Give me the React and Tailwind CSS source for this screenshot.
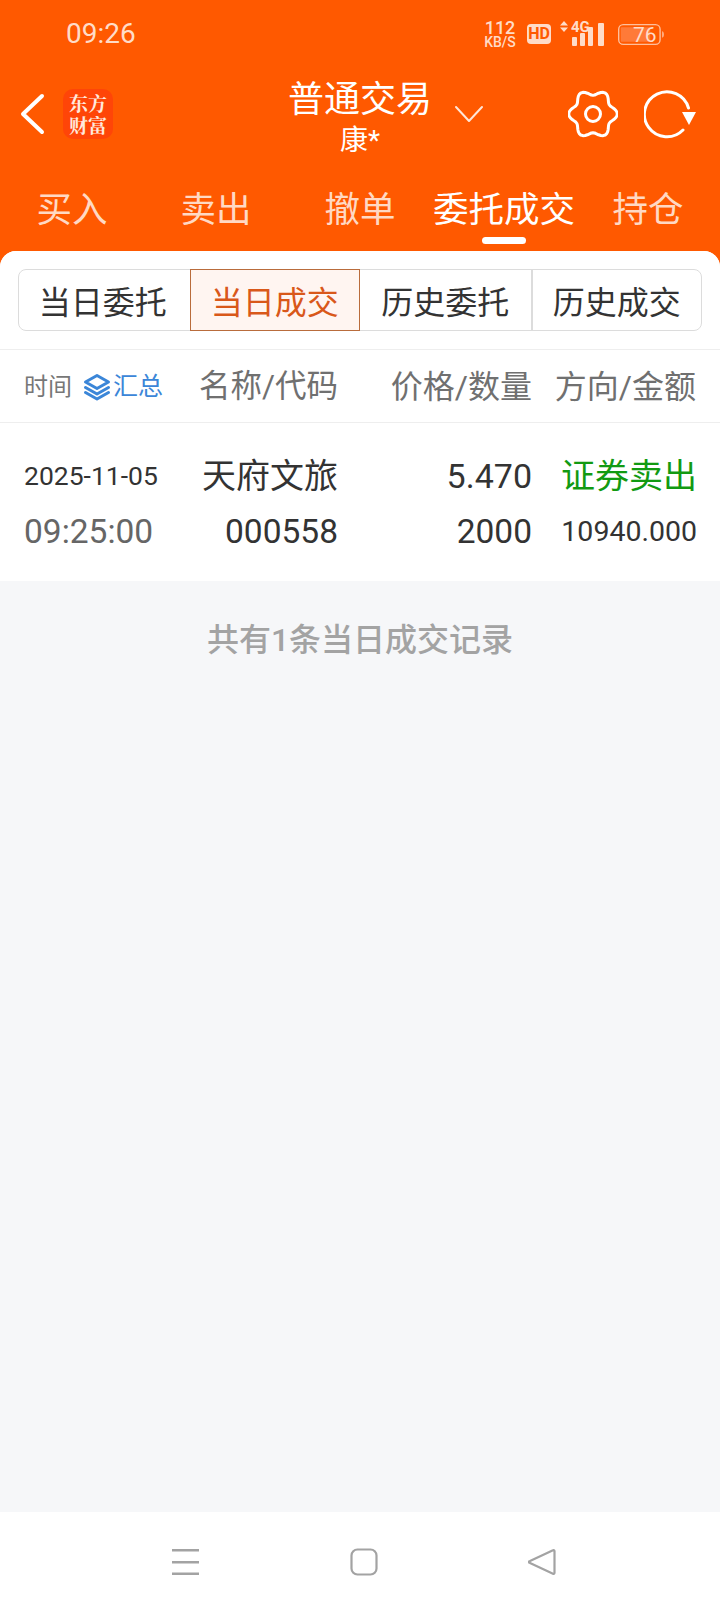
import React from "react";

const tabs = ["买入", "卖出", "撤单", "委托成交", "持仓"];
const segments = ["当日委托", "当日成交", "历史委托", "历史成交"];

// wavy ring for the settings gear, six lobes
const gearPath = () => {
  const pts = [];
  for (let deg = 0; deg < 360; deg += 5) {
    const t = (deg * Math.PI) / 180;
    const r = 21.500 + 2.800 * Math.cos(6 * t);
    pts.push(`${(25 + r * Math.cos(t)).toFixed(2)} ${(25 + r * Math.sin(t)).toFixed(2)}`);
  }
  return "M" + pts.join("L") + "Z";
};

const StatusIcons = () => (
  <div className="flex items-center text-[#ffdcc8]">
    <div className="flex w-[34px] flex-col items-center pr-[4px] font-medium">
      <span className="block text-[18px] leading-[16px]">112</span>
      <span className="block text-[14px] leading-[13px]">KB/S</span>
    </div>
    <div className="ml-[8px] flex h-[20px] w-[24px] items-center justify-center rounded-[4px] bg-[#ffdcc8] text-[16px] font-bold leading-none text-[#ff5900]">
      HD
    </div>
    <div className="relative ml-[9px] h-[26px] w-[46px]">
      <svg width="46" height="26" viewBox="0 0 46 26" fill="#ffdcc8">
        <path d="M4 0l4 4.500H0zM4 11L0 6.500h8z" />
        <rect x="12" y="16" width="5" height="9" rx="1" />
        <rect x="20" y="12" width="5" height="13" rx="1" />
        <rect x="28" y="6" width="5" height="19" rx="1" />
        <rect x="38" y="2" width="6" height="23" rx="1" />
      </svg>
      <span className="absolute left-[11px] top-[-1px] text-[15px] font-bold leading-[14px]">4G</span>
    </div>
    <div className="relative ml-[12px] flex h-[23px] w-[46px] items-center">
      <svg width="50" height="23" viewBox="0 0 50 23" fill="none">
        <rect x="0.750" y="0.750" width="45" height="21.500" rx="5" stroke="#ffbf9c" strokeWidth="1.500" />
        <path d="M4 3.500h31v16H4a1 1 0 0 1-1-1v-14a1 1 0 0 1 1-1z" fill="#ff7a38" />
        <path d="M48 8c1.200.3 1.800 1.400 1.800 3.500S49.200 14.700 48 15z" fill="#ffbf9c" />
      </svg>
      <span className="absolute left-[15px] top-[1px] text-[21px] leading-[22px] text-[#ffdcc8]">76</span>
    </div>
  </div>
);

const Header = () => (
  <div className="bg-[#ff5900] h-[251px] text-white">
    <div className="flex h-[66px] items-center justify-between pl-[66px] pr-[56px] pt-[2px]">
      <span className="text-[28px] leading-none text-[#ffdcc8]">09:26</span>
      <StatusIcons />
    </div>

    <div className="flex h-[96px] items-center">
      <div className="flex w-[200px] items-center pl-[19px]">
        <svg width="26" height="42" viewBox="0 0 26 42" fill="none">
          <path d="M23 3L4 21l19 18" stroke="white" strokeWidth="4" strokeLinecap="round" strokeLinejoin="round" />
        </svg>
        <div className="ml-[18px] flex h-[50px] w-[50px] flex-col items-center justify-center rounded-[10px] bg-[#ff4508] font-['Noto_Serif_CJK_SC',serif] text-[19px] font-bold leading-[22px] text-[#ffe9dd]">
          <span className="block">东方</span>
          <span className="block">财富</span>
        </div>
      </div>

      <div className="flex flex-1 items-center justify-center">
        <div className="w-[52px]" />
        <div className="mt-[12px] flex w-[144px] flex-col items-center">
          <span className="whitespace-nowrap text-[36px] leading-[42px]">普通交易</span>
          <span className="text-[28px] leading-[40px]">康*</span>
        </div>
        <svg className="ml-[22px]" width="30" height="18" viewBox="0 0 30 18" fill="none">
          <path d="M2 2l13 14L28 2" stroke="#ffe6d8" strokeWidth="2" strokeLinecap="round" strokeLinejoin="round" />
        </svg>
      </div>

      <div className="flex w-[200px] items-center justify-end gap-[26px] pr-[23px]">
        <svg width="50" height="50" viewBox="0 0 50 50" fill="none">
          <path d={gearPath()} stroke="white" strokeWidth="3" strokeLinejoin="round" />
          <circle cx="25" cy="25" r="7.500" stroke="white" strokeWidth="3" />
        </svg>
        <svg width="53" height="50" viewBox="0 0 53 50" fill="none">
          <path d="M44.500 19A22.500 22.500 0 1 0 39 41" stroke="white" strokeWidth="3" strokeLinecap="round" />
          <path d="M38 23h14l-7 13z" fill="white" />
        </svg>
      </div>
    </div>

    <div className="grid grid-cols-5 pt-[25px]">
      {tabs.map((t, i) => (
        <div key={t} className="flex flex-col items-center">
          <span className={`text-[35.500px] leading-[46px] whitespace-nowrap ${i === 3 ? "text-white" : "text-[#ffd9c4]"}`}>{t}</span>
          {i === 3 && <div className="mt-[4px] h-[7px] w-[44px] rounded-full bg-white" />}
        </div>
      ))}
    </div>
  </div>
);

const Segments = () => (
  <div className="px-[18px] pt-[18px] pb-[18px]">
    <div className="grid h-[62px] grid-cols-4 rounded-[8px] border border-[#dcdcdc]">
      {segments.map((s, i) => (
        <div
          key={s}
          className={`flex items-center justify-center pt-[5px] text-[32px] ${
            i === 1
              ? "-my-px border border-[#b96c3c] bg-[#fff5f1] text-[#d9581a]"
              : "text-[#333333]"
          } ${i === 0 ? "pr-[3px]" : ""} ${i === 3 ? "border-l-2 border-[#dcdcdc]" : ""}`}
        >
          {s}
        </div>
      ))}
    </div>
  </div>
);

const TableHead = () => (
  <div className="flex h-[74px] items-center border-y border-[#eeeeee] pl-[24px] pt-[2px] text-[#707070]">
    <div className="flex w-[150px] items-center">
      <span className="text-[24px] text-[#777777]">时间</span>
      <svg className="ml-[11px]" width="28" height="28" viewBox="0 0 28 28" fill="none" stroke="#3b86d8" strokeWidth="3" strokeLinejoin="round" strokeLinecap="round">
        <path d="M14 2.500L25.500 9 14 15.500 2.500 9z" />
        <path d="M2.500 14.500L14 21l11.500-6.500" />
        <path d="M2.500 19.500L14 26l11.500-6.500" />
      </svg>
      <span className="ml-[2px] whitespace-nowrap text-[25px] text-[#3b86d8]">汇总</span>
    </div>
    <div className="w-[164px] whitespace-nowrap text-right text-[31.500px]">名称/代码</div>
    <div className="w-[194px] whitespace-nowrap text-right text-[32px]">价格/数量</div>
    <div className="w-[165px] whitespace-nowrap pr-[1px] text-right text-[32px]">方向/金额</div>
  </div>
);

const TradeRow = () => (
  <div className="bg-white pl-[24px] pt-[27px] h-[158px]">
    <div className="flex h-[52px] items-center text-[#333333]">
      <div className="w-[150px] text-[26.500px]">2025-11-05</div>
      <div className="w-[164px] text-right text-[34px]">天府文旅</div>
      <div className="w-[194px] text-right text-[34px]">5.470</div>
      <div className="w-[165px] whitespace-nowrap text-right text-[34px] text-[#129a12]">证券卖出</div>
    </div>
    <div className="mt-[2px] flex h-[56px] items-center text-[#333333]">
      <div className="w-[150px] text-[33.500px] text-[#666666]">09:25:00</div>
      <div className="w-[164px] text-right text-[33.500px]">000558</div>
      <div className="w-[194px] text-right text-[33.500px]">2000</div>
      <div className="w-[165px] text-right text-[28.500px]">10940.000</div>
    </div>
  </div>
);

const NavBar = () => (
  <div className="flex h-[100px] items-start justify-center gap-[150px] bg-white pl-[8px] pt-[36px]">
    <svg width="28" height="28" viewBox="0 0 28 28" fill="#a3a3a3">
      <rect y="1" width="27" height="2.500" />
      <rect y="13" width="27" height="2.500" />
      <rect y="24.500" width="27" height="2.500" />
    </svg>
    <svg width="28" height="28" viewBox="0 0 28 28" fill="none">
      <rect x="1.500" y="1.500" width="25" height="25" rx="6" stroke="#a3a3a3" strokeWidth="2.200" />
    </svg>
    <svg width="28" height="28" viewBox="0 0 28 28" fill="none">
      <path d="M26.500 3v22a1 1 0 0 1-1.500.8L2 15a1 1 0 0 1 0-2L25 2.200a1 1 0 0 1 1.500.8z" stroke="#a3a3a3" strokeWidth="2.200" strokeLinejoin="round" />
    </svg>
  </div>
);

export default function App() {
  return (
    <div className="flex h-[1612px] w-[720px] flex-col overflow-hidden bg-[#ff5900] font-['Roboto','Noto_Sans_CJK_SC',sans-serif]">
      <Header />
      <div className="flex flex-1 flex-col overflow-hidden rounded-t-[16px] bg-[#f6f7f9]">
        <div className="bg-white">
          <Segments />
          <TableHead />
          <TradeRow />
        </div>
        <div className="flex-1 pt-[37px] text-center text-[32px] font-medium leading-[44px] text-[#a3a3a3]">
          共有1条当日成交记录
        </div>
        <NavBar />
      </div>
    </div>
  );
}
